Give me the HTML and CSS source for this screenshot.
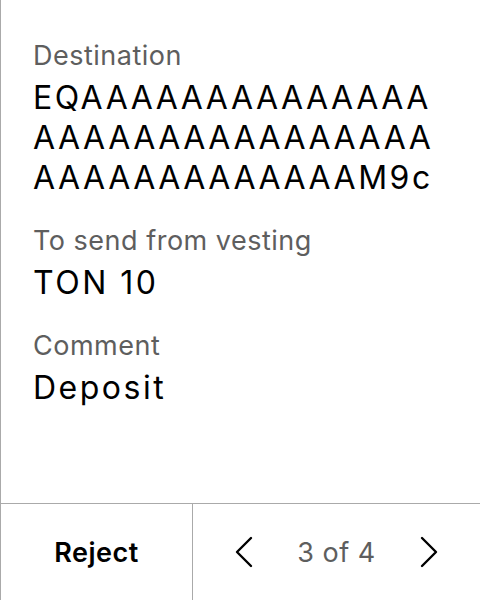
FILE: index.html
```html
<!DOCTYPE html>
<html>
<head>
<meta charset="utf-8">
<link rel="stylesheet" href="styles.css">
</head>
<body>
<div class="screen">
  <main class="content">
    <div class="field">
      <div class="label">Destination</div>
      <div class="value address">EQAAAAAAAAAAAAAAAAAAAAAAAAAAAAAAAAAAAAAAAAAAAM9c</div>
    </div>
    <div class="field">
      <div class="label">To send from vesting</div>
      <div class="value">TON 10</div>
    </div>
    <div class="field">
      <div class="label">Comment</div>
      <div class="value">Deposit</div>
    </div>
  </main>
  <footer class="footer">
    <div class="reject">Reject</div>
    <div class="pager">
      <svg class="chev" width="18" height="32" viewBox="0 0 18 32"><path d="M16 2 L2 16 L16 30" fill="none" stroke="#000" stroke-width="2.4" stroke-linecap="round" stroke-linejoin="round"/></svg>
      <span class="count">3 of 4</span>
      <svg class="chev" width="18" height="32" viewBox="0 0 18 32"><path d="M2 2 L16 16 L2 30" fill="none" stroke="#000" stroke-width="2.4" stroke-linecap="round" stroke-linejoin="round"/></svg>
    </div>
  </footer>
</div>
</body>
</html>
```
FILE: styles.css
```css
html, body {
  margin: 0;
  padding: 0;
  background: #fff;
}
body {
  font-family: Inter, "Noto Sans", sans-serif;
  color: #000;
}
.screen {
  width: 480px;
  height: 600px;
  box-sizing: border-box;
  border-left: 1px solid #aaaaaa;
  display: flex;
  flex-direction: column;
}
.content {
  flex: 1;
  padding: 40px 32px 0 32px;
  display: flex;
  flex-direction: column;
  gap: 27px;
}
.label {
  font-size: 27px;
  line-height: 32px;
  letter-spacing: 0.5px;
  color: #5e5e5e;
  margin-bottom: 6px;
}
.value {
  font-size: 32px;
  line-height: 40px;
  letter-spacing: 2.5px;
  color: #000;
}
.address {
  word-break: break-all;
}
.footer {
  height: 96px;
  border-top: 1px solid #aaaaaa;
  display: flex;
}
.reject {
  width: 191px;
  border-right: 1px solid #aaaaaa;
  display: flex;
  align-items: center;
  justify-content: center;
  font-size: 27px;
  font-weight: 600;
  letter-spacing: 0.5px;
}
.pager {
  flex: 1;
  display: flex;
  align-items: center;
  justify-content: space-between;
  padding: 0 42px 0 42px;
}
.count {
  font-size: 27px;
  letter-spacing: 0.5px;
  color: #5e5e5e;
}
.chev {
  display: block;
}
```
